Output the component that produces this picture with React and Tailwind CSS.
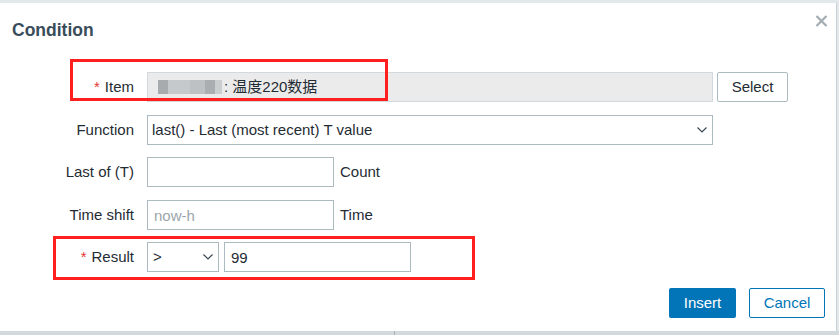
import { useState } from 'react';

const font = { fontFamily: '"Liberation Sans", Arial, "Noto Sans CJK SC", sans-serif' };

function Chevron({ className }) {
  return (
    <svg className={className} width="10" height="6" viewBox="0 0 10 6" fill="none">
      <polyline points="0.5,0.5 5,5 9.5,0.5" stroke="#3b4a52" strokeWidth="1.2" />
    </svg>
  );
}

function Label({ required, children }) {
  return (
    <div className="w-[134px] shrink-0 text-right whitespace-nowrap">
      {required && <span className="text-[#e33734] mr-[5px]">*</span>}
      {children}
    </div>
  );
}

export default function App() {
  const [fn, setFn] = useState('last');
  const [op, setOp] = useState('>');
  const [lastOf, setLastOf] = useState('');
  const [shift, setShift] = useState('');
  const [result, setResult] = useState('99');

  return (
    <div className="w-[839px] h-[335px] bg-[#e3e8eb] flex flex-col overflow-hidden text-[15px] text-[#1f2c33]" style={font}>
      <div className="h-[3px] shrink-0" />
      <div className="relative w-[837px] h-[328px] bg-white border-r border-[#c9d1d6] flex flex-col">
        {/* header */}
        <div className="flex items-start justify-between pl-[12px] pr-[8px] pt-[17px]">
          <h1 className="text-[17.5px] leading-[20px] font-bold text-[#394c59]">Condition</h1>
          <button className="mt-[-5px] text-[#a3acb2]" aria-label="Close">
            <svg width="13" height="12" viewBox="0 0 13 12">
              <path d="M1.5 1 L11.5 11 M11.5 1 L1.5 11" stroke="#a3acb2" strokeWidth="2.2" />
            </svg>
          </button>
        </div>

        {/* form */}
        <div className="mt-[32px] flex flex-col">
          <div className="flex items-center h-[30px] gap-[13px]">
            <Label required>Item</Label>
            <div className="flex items-center w-[566px] h-[30px] bg-[#ebebeb] border border-[#d2d8dc] pl-[10px]">
              <div className="flex h-[14px]">
                <div className="w-[10px] bg-[#a7abad]" />
                <div className="w-[22px] bg-[#c6c9cb]" />
                <div className="w-[15px] bg-[#bec1c3]" />
                <div className="w-[10px] bg-[#aaaeb0]" />
                <div className="w-[7px] bg-[#cbcecf]" />
              </div>
              <span className="ml-[2px]">: 温度220数据</span>
            </div>
            <button className="-ml-[9px] w-[71px] h-[30px] bg-white border border-[#acbbc2] rounded-[2px] text-[#1f2c33]">Select</button>
          </div>

          <div className="flex items-center h-[30px] gap-[13px] mt-[13px]">
            <Label>Function</Label>
            <div className="relative w-[566px] h-[30px]">
              <select
                value={fn}
                onChange={e => setFn(e.target.value)}
                className="appearance-none w-full h-full border border-[#acbbc2] bg-white pl-[4px] outline-none"
              >
                <option value="last">last() - Last (most recent) T value</option>
              </select>
              <Chevron className="absolute right-[6px] top-[12px] pointer-events-none" />
            </div>
          </div>

          <div className="flex items-center h-[30px] gap-[13px] mt-[12px]">
            <Label>Last of (T)</Label>
            <input value={lastOf} onChange={e => setLastOf(e.target.value)} className="w-[187px] h-[30px] border border-[#acbbc2] px-[5px] outline-none" />
            <span className="-ml-[7px]">Count</span>
          </div>

          <div className="flex items-center h-[30px] gap-[13px] mt-[13px]">
            <Label>Time shift</Label>
            <input
              value={shift}
              onChange={e => setShift(e.target.value)}
              placeholder="now-h"
              className="w-[187px] h-[30px] border border-[#acbbc2] px-[6px] outline-none placeholder:text-[#9ba6ac]"
            />
            <span className="-ml-[7px]">Time</span>
          </div>

          <div className="flex items-center h-[30px] gap-[13px] mt-[12px]">
            <Label required>Result</Label>
            <div className="relative w-[72px] h-[30px]">
              <select
                value={op}
                onChange={e => setOp(e.target.value)}
                className="appearance-none w-full h-full border border-[#acbbc2] bg-white pl-[5px] outline-none"
              >
                <option value=">">&gt;</option>
                <option value="<">&lt;</option>
                <option value="=">=</option>
              </select>
              <Chevron className="absolute right-[6px] top-[12px] pointer-events-none" />
            </div>
            <input value={result} onChange={e => setResult(e.target.value)} className="-ml-[8px] w-[187px] h-[30px] border border-[#acbbc2] px-[6px] outline-none" />
          </div>
        </div>

        {/* footer */}
        <div className="mt-[16px] flex justify-end gap-[13px] pr-[11px]">
          <button className="w-[67px] h-[30px] bg-[#0275b8] text-white rounded-[2px]">Insert</button>
          <button className="w-[76px] h-[30px] bg-white border border-[#0275b8] text-[#0275b8] rounded-[2px]">Cancel</button>
        </div>

        {/* annotation boxes */}
        <div className="absolute left-[70px] top-[56px] w-[318px] h-[42px] border-[3px] border-[#ff1f1f] pointer-events-none" />
        <div className="absolute left-[53px] top-[233px] w-[422px] h-[44px] border-[3px] border-[#ff1f1f] pointer-events-none" />
      </div>
      <div className="flex-1 bg-[#d3dade] flex">
        <div className="ml-[394px] w-px bg-[#a7b1b7]" />
      </div>
    </div>
  );
}
